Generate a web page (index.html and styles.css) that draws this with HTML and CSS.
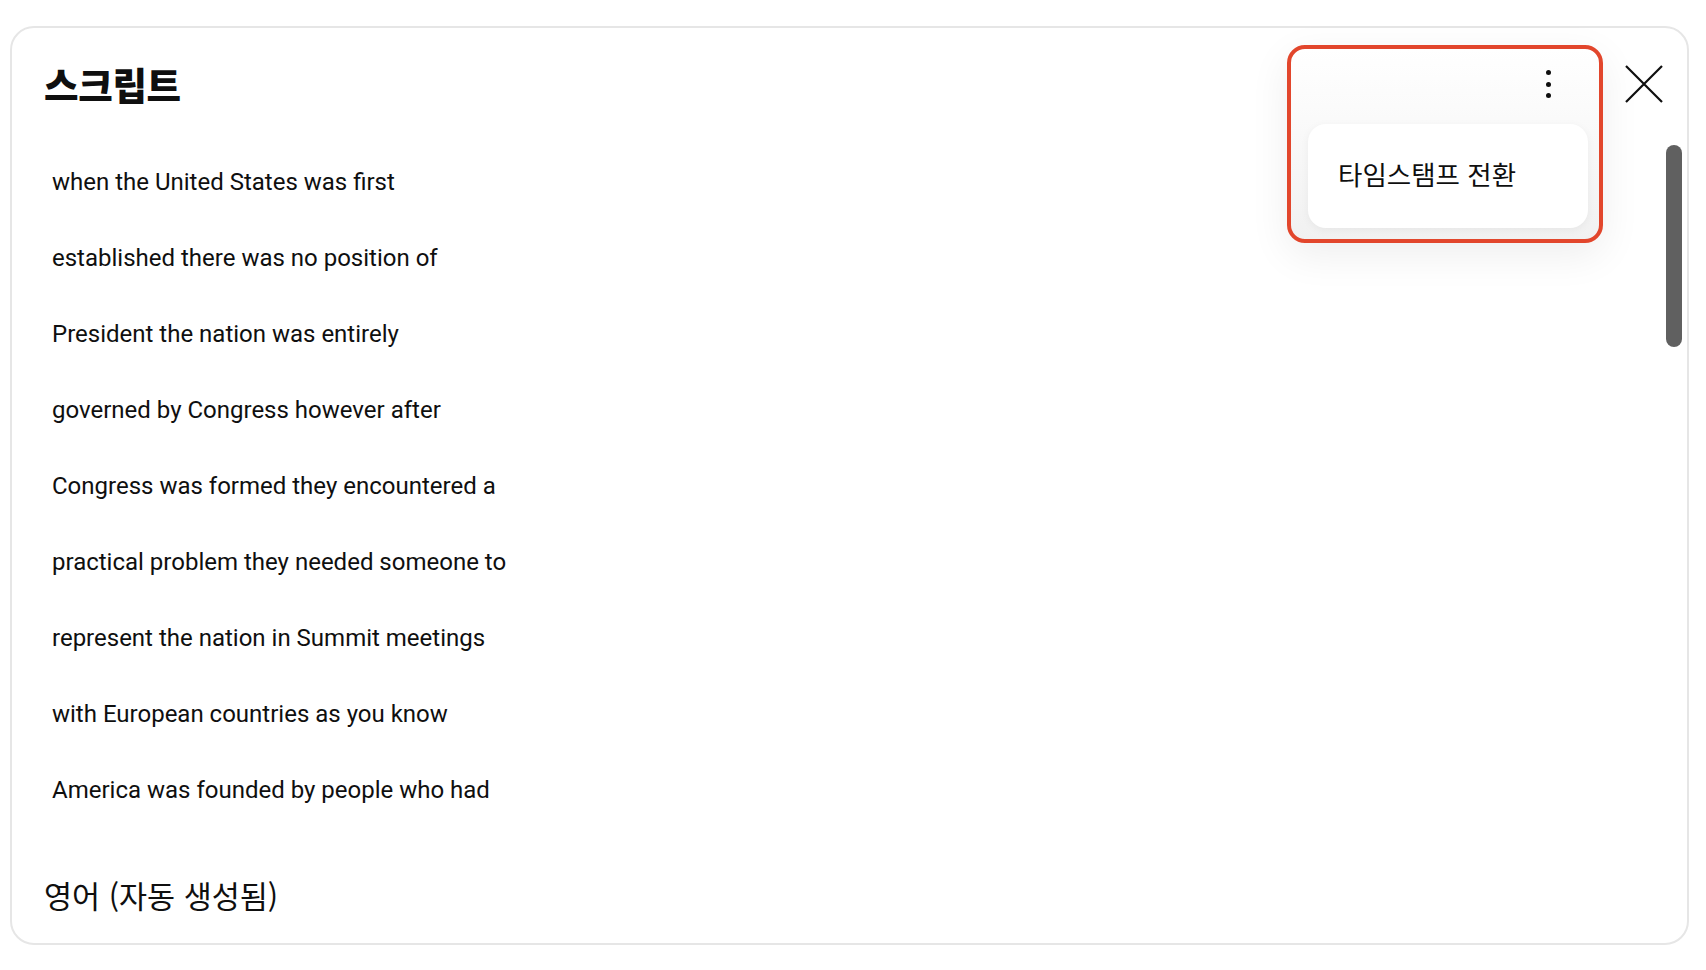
FILE: index.html
```html
<!DOCTYPE html>
<html lang="ko">
<head>
<meta charset="utf-8">
<title>스크립트</title>
<link rel="stylesheet" href="styles.css">
</head>
<body>
<div class="panel">
  <header class="panel-header">
    <h1 class="panel-title">스크립트</h1>
    <button class="close-btn" aria-label="닫기">
      <svg width="38" height="38" viewBox="0 0 38 38"><path d="M1 1 L37 37 M37 1 L1 37" stroke="#0f0f0f" stroke-width="2.2" fill="none"/></svg>
    </button>
  </header>
  <div class="segments">
    <div class="segment">when the United States was first</div>
    <div class="segment">established there was no position of</div>
    <div class="segment">President the nation was entirely</div>
    <div class="segment">governed by Congress however after</div>
    <div class="segment">Congress was formed they encountered a</div>
    <div class="segment">practical problem they needed someone to</div>
    <div class="segment">represent the nation in Summit meetings</div>
    <div class="segment">with European countries as you know</div>
    <div class="segment">America was founded by people who had</div>
  </div>
  <footer class="panel-footer">영어 (자동 생성됨)</footer>
  <div class="scroll-thumb"></div>
  <div class="menu-highlight">
    <button class="more-btn" aria-label="더보기">
      <span class="dot"></span><span class="dot"></span><span class="dot"></span>
    </button>
    <div class="menu">
      <div class="menu-item">타임스탬프 전환</div>
    </div>
  </div>
</div>
</body>
</html>
```
FILE: styles.css
```css
* { box-sizing: border-box; }
html, body { margin: 0; padding: 0; background: #ffffff; }
body {
  font-family: Roboto, "Noto Sans CJK KR", sans-serif;
  color: #0f0f0f;
  width: 1706px;
  height: 970px;
  overflow: hidden;
}
.panel {
  position: relative;
  margin: 26px 0 0 10px;
  width: 1679px;
  height: 919px;
  border: 2px solid #e6e6e6;
  border-radius: 24px;
  background: #fff;
  display: flex;
  flex-direction: column;
}
.panel-header {
  display: flex;
  align-items: center;
  justify-content: space-between;
  height: 84px;
  padding: 28px 24px 0 32px;
}
.panel-title {
  margin: 0;
  font-family: "Noto Sans CJK KR", sans-serif;
  font-weight: 900;
  font-size: 37.5px;
  line-height: 56px;
  letter-spacing: -0.3px;
}
.close-btn {
  border: 0;
  background: none;
  padding: 0;
  width: 38px;
  height: 38px;
  display: flex;
}
.segments {
  margin-top: 32px;
  padding-left: 40px;
  display: flex;
  flex-direction: column;
}
.segment {
  height: 76px;
  line-height: 76px;
  font-size: 24px;
}
.panel-footer {
  margin-top: 42px;
  padding-left: 32px;
  height: 50px;
  line-height: 50px;
  font-family: "Noto Sans CJK KR", sans-serif;
  font-size: 30.5px;
}
.scroll-thumb {
  position: absolute;
  top: 117px;
  right: 5px;
  width: 16px;
  height: 202px;
  border-radius: 8px;
  background: #606060;
}
.menu-highlight {
  position: absolute;
  left: 1275px;
  top: 17px;
  width: 316px;
  height: 198px;
  border: 4px solid #e2462c;
  border-radius: 18px;
  background: linear-gradient(#ffffff 0%, #fbfbfb 30%, #f1f1f1 100%);
  box-shadow: 0 12px 40px rgba(0, 0, 0, 0.07);
}
.more-btn {
  position: absolute;
  left: 250px;
  top: 18px;
  width: 14px;
  height: 34px;
  padding: 0;
  border: 0;
  background: none;
  display: flex;
  flex-direction: column;
  align-items: center;
  justify-content: center;
  gap: 6.5px;
}
.dot {
  width: 5px;
  height: 5px;
  border-radius: 50%;
  background: #0f0f0f;
}
.menu {
  position: absolute;
  left: 17px;
  top: 75px;
  width: 280px;
  height: 104px;
  border-radius: 18px;
  background: #fff;
  box-shadow: 0 2px 8px rgba(0, 0, 0, 0.05);
  display: flex;
  align-items: center;
  padding-bottom: 6px;
}
.menu-item {
  padding-left: 30px;
  font-family: "Noto Sans CJK KR", sans-serif;
  font-size: 26.5px;
}
```
